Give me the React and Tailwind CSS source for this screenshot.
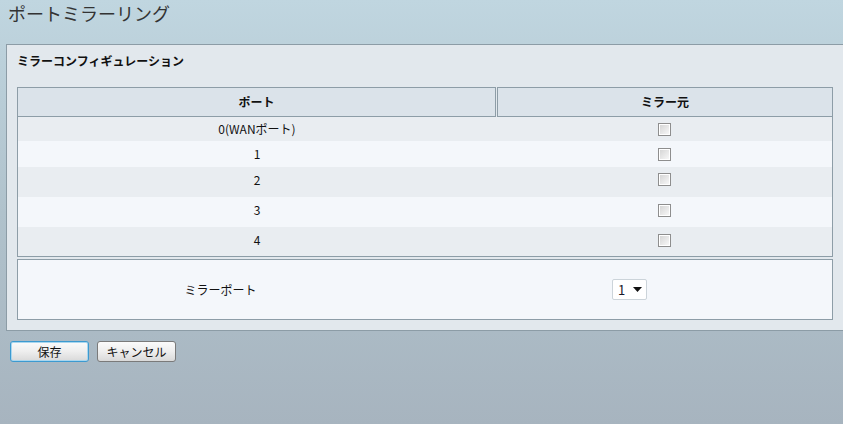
const FONT = { fontFamily: '"Noto Sans CJK JP", "Liberation Sans", sans-serif' };

const rows = [
  { label: "0(WANポート)", h: "h-[24px]", bg: "bg-[#e9edf1]" },
  { label: "1", h: "h-[26px]", bg: "bg-[#f4f7fb]" },
  { label: "2", h: "h-[30px] pb-[5px]", bg: "bg-[#e9edf1]" },
  { label: "3", h: "h-[30px] pb-[4px]", bg: "bg-[#f4f7fb]" },
  { label: "4", h: "h-[29px] pb-[3px]", bg: "bg-[#e9edf1]" },
];

function Checkbox() {
  return (
    <div className="w-[13px] h-[13px] border border-[#8e8e8e] bg-white p-px">
      <div className="w-full h-full bg-gradient-to-br from-[#d6d6d6] to-[#f7f7f7]" />
    </div>
  );
}

function Button({ children, focused }) {
  return (
    <button
      className={`w-[79px] h-[21px] rounded-[3px] border text-[12px] leading-none text-[#111] bg-gradient-to-b from-[#fbfbfb] via-[#eeeeee] to-[#d9d9d9] ${
        focused ? "border-[#3c9ad0] shadow-[inset_0_0_0_1px_#a9d6ee]" : "border-[#7a7a7a]"
      }`}
      style={FONT}
    >
      {children}
    </button>
  );
}

export default function App() {
  return (
    <div
      className="w-full min-h-[424px] bg-gradient-to-b from-[#c0d6e0] via-[#b0c2cc] to-[#a7b4bf]"
      style={FONT}
    >
      {/* page title */}
      <div className="h-[44px] pl-[8px]">
        <h1 className="text-[18px] leading-[26px] font-normal text-[#333]">
          ポートミラーリング
        </h1>
      </div>

      {/* panel */}
      <div className="ml-[6px] border-t border-l border-b border-[#8c9ca6] bg-[#e2e8ed] pl-[10px] pr-[10px] pt-[8px] pb-[10px]">
        <p className="text-[12px] leading-[16px] font-bold text-[#111] mb-[18px]">
          ミラーコンフィギュレーション
        </p>

        {/* table */}
        <div className="flex gap-px">
          <div className="w-[479px] h-[30px] border border-[#8d9da7] bg-[#dbe3ea] flex items-center justify-center text-[12px] font-bold text-[#111]">
            ポート
          </div>
          <div className="flex-1 h-[30px] border border-[#8d9da7] bg-[#dbe3ea] flex items-center justify-center text-[12px] font-bold text-[#111]">
            ミラー元
          </div>
        </div>
        <div className="border-x border-b border-[#8d9da7]">
          {rows.map((r) => (
            <div key={r.label} className={`flex ${r.h} ${r.bg}`}>
              <div className="w-[478px] flex items-center justify-center text-[12px] text-[#111]">
                {r.label}
              </div>
              <div className="flex-1 flex items-center justify-center">
                <Checkbox />
              </div>
            </div>
          ))}
        </div>

        {/* mirror port */}
        <div className="mt-[2px] h-[61px] border border-[#8d9da7] bg-[#f4f7fb] flex items-center">
          <div className="w-[405px] text-center text-[12px] text-[#111]">ミラーポート</div>
          <div className="ml-[189px] w-[35px] h-[21px] border border-[#ccd4da] rounded-[2px] bg-white flex items-center justify-between pl-[5px] pr-[4px]">
            <span className="text-[13px] text-[#1a1a2a]">1</span>
            <svg width="9" height="5" viewBox="0 0 9 5">
              <path d="M0 0h9L4.5 5z" fill="#111" />
            </svg>
          </div>
        </div>
      </div>

      {/* buttons */}
      <div className="flex gap-[8px] pl-[10px] pt-[10px]">
        <Button focused>保存</Button>
        <Button>キャンセル</Button>
      </div>
    </div>
  );
}
